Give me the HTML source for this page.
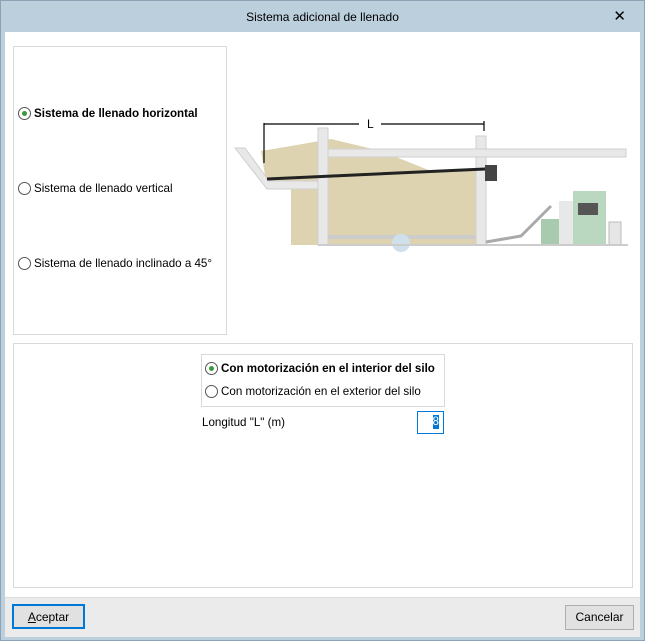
<!DOCTYPE html>
<html><head><style>
body{margin:0;width:645px;height:641px;font-family:"Liberation Sans",sans-serif;font-size:11.6px;color:#000;overflow:hidden;background:#bccfdc}
.win{position:absolute;left:0;top:0;width:643px;height:639px;border:1px solid #8da3b5;background:#bccfdc}
.title{position:absolute;left:0;top:0;width:643px;height:31px;text-align:center;line-height:32px;font-size:12px}
.x{position:absolute;right:18px;top:0;font-size:15px;line-height:32px}
.content{position:absolute;left:4px;top:31px;width:635px;height:565px;background:#fff}
.foot{position:absolute;left:4px;top:596px;width:635px;height:39px;background:#ebebeb;border-top:1px solid #dcdcdc}
.p{position:absolute;background:#fff;border:1px solid #d9d9d9}
.r{position:absolute;display:flex;align-items:center;white-space:nowrap}
.rb{border:1px solid #555;border-radius:50%;background:#fff;margin-right:3px;position:relative;box-sizing:border-box;width:13px;height:13px}
.rb.on::after{content:"";position:absolute;left:3px;top:3px;width:5px;height:5px;border-radius:50%;background:#3a9a3a}
.btn{position:absolute;height:25px;border:1px solid #adadad;background:#e1e1e1;text-align:center;line-height:23px;box-sizing:border-box;font-size:12px}
</style></head><body>
<div class="win">
<div class="title">Sistema adicional de llenado<span class="x">✕</span></div>
<div class="content"></div>
<div class="foot"></div>
<div class="p" style="left:12px;top:45px;width:212px;height:287px"></div>
<div class="r" style="left:17px;top:106px;font-weight:bold"><span class="rb on"></span>Sistema de llenado horizontal</div>
<div class="r" style="left:17px;top:181px"><span class="rb"></span>Sistema de llenado vertical</div>
<div class="r" style="left:17px;top:256px"><span class="rb"></span>Sistema de llenado inclinado a 45°</div>
<svg style="position:absolute;left:230px;top:110px" width="400" height="180">
<polygon points="30,40 60,35 100,28 150,40 200,60 250,60 250,134 60,134 60,70 35,70" fill="#ddd3b0"/>
<polygon points="4,37 14,37 38,70 95,70 95,78 36,78" fill="#e8e8e8" stroke="#cfcfcf"/>
<rect x="87" y="17" width="10" height="117" fill="#e8e8e8" stroke="#cfcfcf"/>
<rect x="245" y="25" width="10" height="109" fill="#e8e8e8" stroke="#cfcfcf"/>
<rect x="97" y="38" width="298" height="8" fill="#e8e8e8" stroke="#cfcfcf"/>
<rect x="97" y="124" width="148" height="4" fill="#ccc"/>
<path d="M33,12V52M33,13H128M150,13H253M253,10V20" stroke="#000" stroke-width="1.2" fill="none"/>
<text x="136" y="17" font-size="12" font-family="Liberation Sans">L</text>
<path d="M36,68L254,58" stroke="#222" stroke-width="3"/>
<rect x="254" y="54" width="12" height="16" fill="#444"/>
<circle cx="170" cy="132" r="9" fill="#cfe0ec"/>
<path d="M255,131L290,125L320,95" stroke="#aaa" stroke-width="3" fill="none"/>
<rect x="310" y="108" width="20" height="27" fill="#a8cbb0"/>
<rect x="328" y="90" width="15" height="45" fill="#e8e8e8"/>
<rect x="342" y="80" width="33" height="55" fill="#b9d8bf"/>
<rect x="347" y="92" width="20" height="12" fill="#555"/>
<rect x="378" y="111" width="12" height="23" fill="#e6e6e6" stroke="#bbb"/>
<rect x="87" y="133" width="310" height="2" fill="#ccc"/>
</svg>
<div class="p" style="left:12px;top:342px;width:618px;height:243px"></div>
<div class="p" style="left:200px;top:353px;width:242px;height:51px"></div>
<div class="r" style="left:204px;top:361px;font-weight:bold"><span class="rb on"></span>Con motorización en el interior del silo</div>
<div class="r" style="left:204px;top:384px"><span class="rb"></span>Con motorización en el exterior del silo</div>
<div class="r" style="left:201px;top:415px">Longitud "L" (m)</div>
<div style="position:absolute;left:416px;top:410px;width:25px;height:21px;border:1px solid #0078d7;background:#fff"><span style="position:absolute;right:4px;top:3px;background:#0078d7;color:#fff;line-height:14px">8</span></div>
<div class="btn" style="left:11px;top:603px;width:73px;border:2px solid #0078d7"><u>A</u>ceptar</div>
<div class="btn" style="left:564px;top:604px;width:69px">Cancelar</div>
</div>
</body></html>
